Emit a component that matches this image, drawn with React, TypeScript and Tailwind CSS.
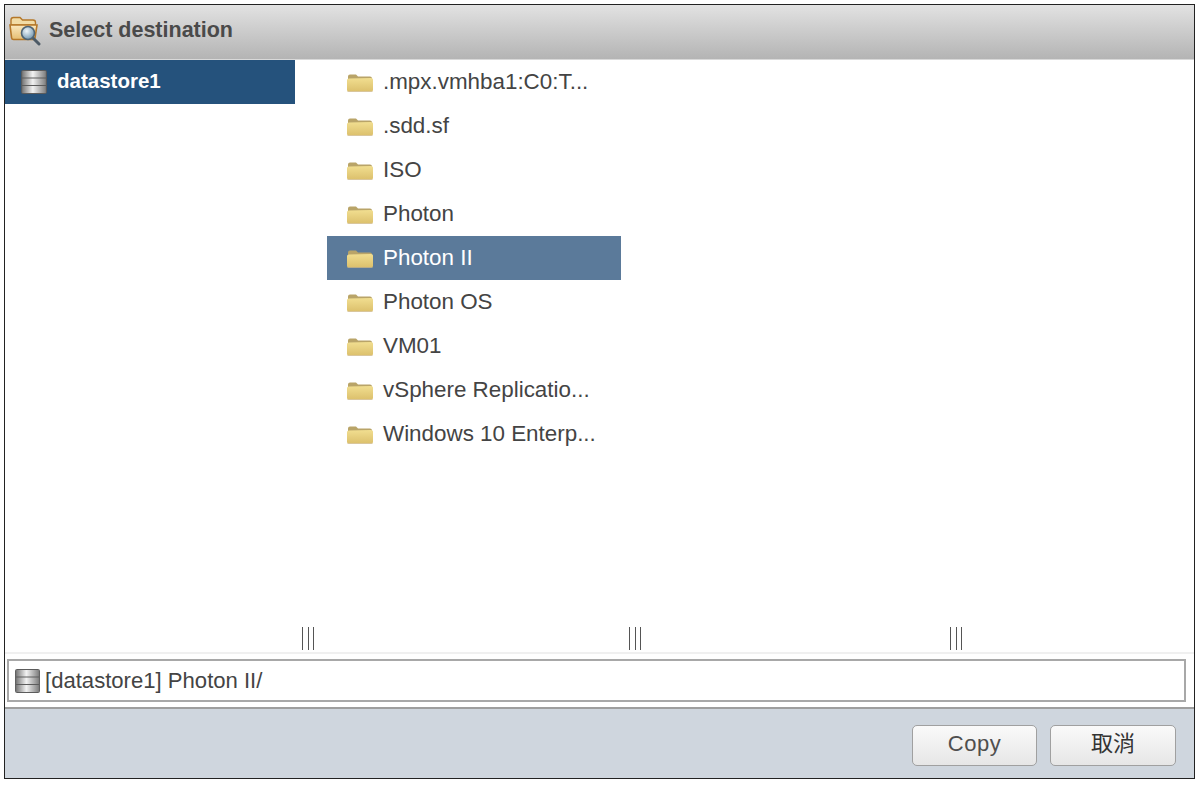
const font = { fontFamily: '"Liberation Sans", Arial, sans-serif' };

const folders = [
  ".mpx.vmhba1:C0:T...",
  ".sdd.sf",
  "ISO",
  "Photon",
  "Photon II",
  "Photon OS",
  "VM01",
  "vSphere Replicatio...",
  "Windows 10 Enterp...",
];

function FolderIcon() {
  return (
    <svg width="28" height="22" viewBox="0 0 28 22" className="shrink-0">
      <defs>
        <linearGradient id="folderFront" x1="0" y1="0" x2="0" y2="1">
          <stop offset="0" stopColor="#f1de90" />
          <stop offset="1" stopColor="#dcc06c" />
        </linearGradient>
      </defs>
      <path d="M2 5.5 Q2 3.5 4 3.5 H10 L12 5.5 H24 Q26 5.5 26 7.5 V10 H2 Z" fill="#b9a468" />
      <path d="M1 9 Q1 7.5 3 7.5 L25 7 Q27 7 27 8.5 V19 Q27 20.5 25 20.5 H3 Q1 20.5 1 19 Z" fill="url(#folderFront)" />
      <path d="M1.5 20.5 H26.5" stroke="#cdb78a" strokeWidth="1" opacity="0.6" />
    </svg>
  );
}

function DatastoreIcon({ width }: { width: number }) {
  return (
    <svg width={width} height="26" viewBox="0 0 26 26" preserveAspectRatio="none" className="shrink-0">
      <defs>
        <linearGradient id="dsBand" x1="0" y1="0" x2="1" y2="0">
          <stop offset="0" stopColor="#777777" />
          <stop offset="0.45" stopColor="#f2f2f2" />
          <stop offset="1" stopColor="#7f7f7f" />
        </linearGradient>
      </defs>
      <rect x="1" y="1" width="24" height="24" rx="2" fill="#5c5c5c" />
      <rect x="2" y="2" width="22" height="6.5" fill="url(#dsBand)" />
      <rect x="2" y="9.5" width="22" height="6.5" fill="url(#dsBand)" />
      <rect x="2" y="17" width="22" height="7" fill="url(#dsBand)" />
    </svg>
  );
}

function DestinationIcon() {
  return (
    <svg width="32" height="32" viewBox="0 0 32 32" className="shrink-0">
      <defs>
        <linearGradient id="destFolder" x1="0" y1="0" x2="0" y2="1">
          <stop offset="0" stopColor="#fbe9bf" />
          <stop offset="1" stopColor="#e5bd72" />
        </linearGradient>
        <radialGradient id="destLens" cx="0.4" cy="0.35" r="0.7">
          <stop offset="0" stopColor="#eef5fa" />
          <stop offset="1" stopColor="#6d93ad" />
        </radialGradient>
      </defs>
      <path d="M2 6 Q2 3.5 4.5 3.5 H11 L13.5 6 H24 Q26.5 6 26.5 8.5 V11 H2 Z" fill="#f2dca6" stroke="#b5782a" strokeWidth="1.4" />
      <path d="M1 11 H28 L26 24 Q25.8 25.5 24 25.5 H4.5 Q2.8 25.5 2.6 24 Z" fill="url(#destFolder)" stroke="#b5782a" strokeWidth="1.6" />
      <path d="M24 24 L30 30" stroke="#4d5a66" strokeWidth="3" strokeLinecap="round" />
      <circle cx="19" cy="19" r="6.5" fill="url(#destLens)" stroke="#4f6373" strokeWidth="1.6" />
    </svg>
  );
}

function Gripper() {
  return (
    <div className="flex h-[23px] w-[14px] justify-between px-px">
      <span className="h-full w-px bg-[#555555]" />
      <span className="h-full w-px bg-[#555555]" />
      <span className="h-full w-px bg-[#555555]" />
    </div>
  );
}

export default function App() {
  return (
    <div className="h-[785px] w-[1200px] bg-white pl-[4px] pr-[4px] pt-[4px]" style={font}>
      <div className="flex h-[775px] w-[1191px] flex-col border border-[#222222]">
        <div className="flex h-[55px] shrink-0 items-center gap-[8px] border-b border-[#d9d9d9] bg-gradient-to-b from-[#e2e2e2] to-[#b4b4b4] pl-[4px] pb-[4px]">
          <DestinationIcon />
          <span className="text-[21.5px] font-bold text-[#4a4a4a]">Select destination</span>
        </div>

        <div className="flex min-h-0 flex-1">
          <div className="w-[322px]">
            <div className="flex h-[44px] w-[290px] items-center gap-[9px] bg-[#25527c] pb-[1px] pl-[15px]">
              <DatastoreIcon width={28} />
              <span className="text-[20.5px] font-bold text-white">datastore1</span>
            </div>
          </div>
          <div className="w-[294px]">
            {folders.map((name) => {
              const selected = name === "Photon II";
              return (
                <div
                  key={name}
                  className={
                    selected
                      ? "flex h-[44px] items-center gap-[9px] bg-[#5b7a9a] pl-[19px] text-white"
                      : "flex h-[44px] items-center gap-[9px] pl-[19px] text-[#444444]"
                  }
                >
                  <FolderIcon />
                  <span className="whitespace-nowrap pb-[1px] text-[22.4px]">{name}</span>
                </div>
              );
            })}
          </div>
        </div>

        <div className="flex h-[26px] shrink-0 items-start pl-[296px] pt-[1px]">
          <Gripper />
          <div className="ml-[313px]">
            <Gripper />
          </div>
          <div className="ml-[307px]">
            <Gripper />
          </div>
        </div>

        <div className="flex h-[55px] shrink-0 items-center border-t-2 border-[#f0f0f0] pl-[2px] pr-[8px]">
          <div className="flex h-[43px] flex-1 items-center gap-[4px] border-2 border-[#a8a8a8] bg-white pl-[5px]">
            <DatastoreIcon width={27} />
            <span className="text-[22.1px] text-[#444444]">[datastore1] Photon II/</span>
          </div>
        </div>

        <div className="flex h-[71px] shrink-0 items-start justify-end gap-[13px] border-t-2 border-[#9e9e9e] bg-[#cfd6de] pr-[18px] pt-[16px]">
          <button className="h-[41px] w-[125px] rounded-[5px] border border-[#a0a0a0] bg-gradient-to-b from-[#fafafa] to-[#e6e6e6] pb-[4px] text-[22px] tracking-[0.5px] text-[#4f4f4f]">
            Copy
          </button>
          <button
            className="h-[41px] w-[126px] rounded-[5px] border border-[#a0a0a0] bg-gradient-to-b from-[#fafafa] to-[#e6e6e6] pb-[4px] text-[22px] text-[#333333]"
            style={{ fontFamily: '"Liberation Sans", "Noto Sans CJK TC", sans-serif' }}
          >
            取消
          </button>
        </div>
      </div>
    </div>
  );
}
